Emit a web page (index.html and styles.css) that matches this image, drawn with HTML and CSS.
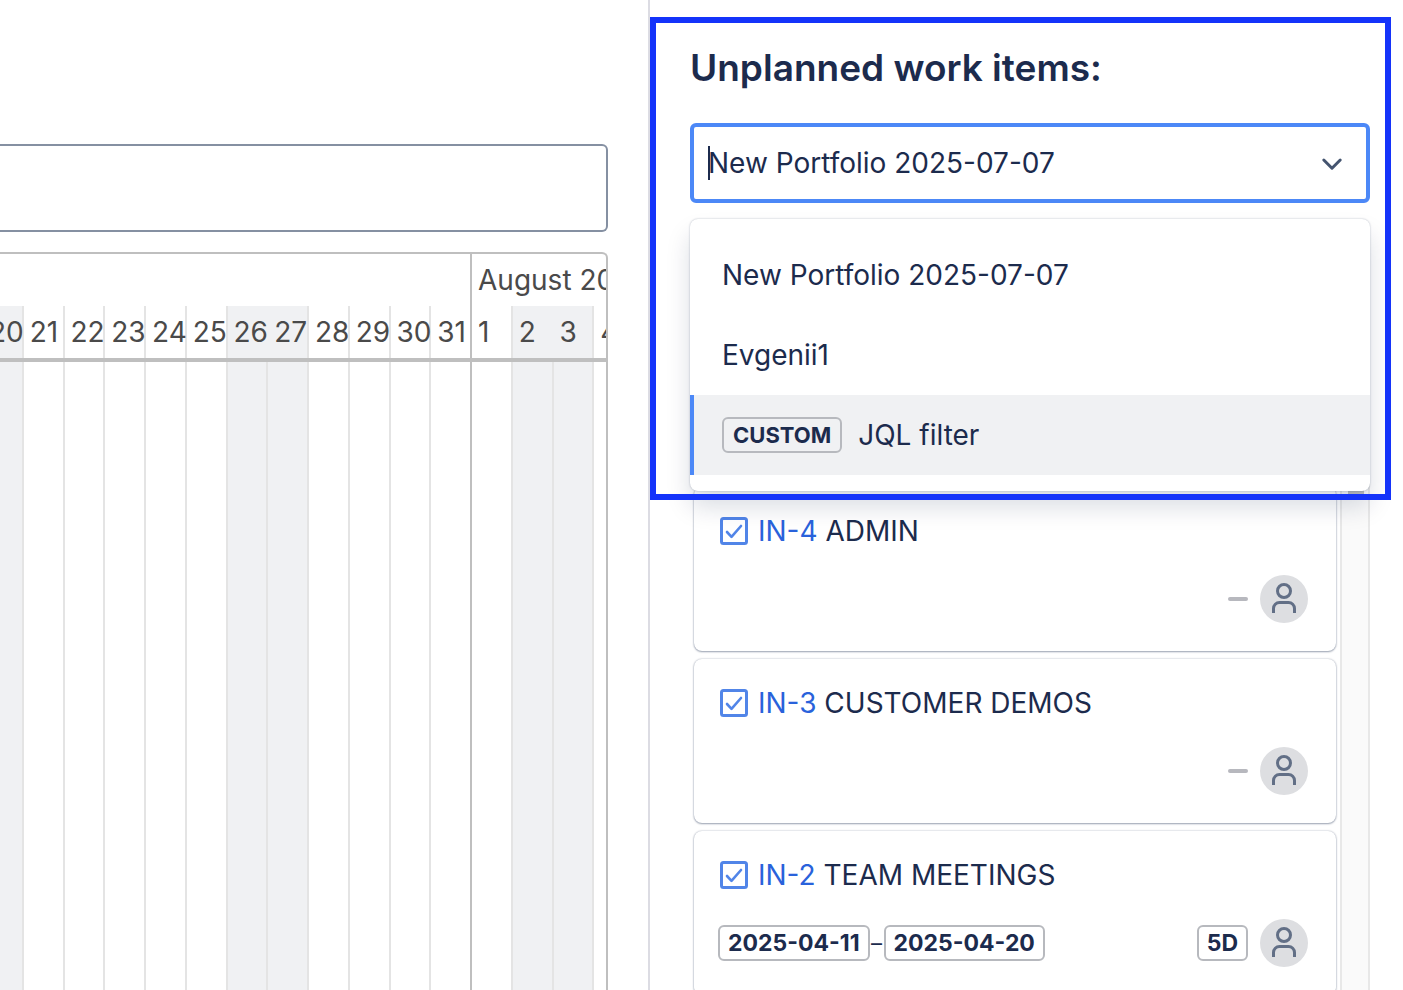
FILE: index.html
```html
<!DOCTYPE html>
<html lang="en">
<head>
<meta charset="utf-8">
<title>Unplanned work items</title>
<link rel="stylesheet" href="styles.css">
</head>
<body>
<svg width="0" height="0" class="sprite" aria-hidden="true">
  <symbol id="task" viewBox="0 0 28 28"><rect x="1.5" y="1.5" width="25" height="25" rx="2" fill="none" stroke="#5185E8" stroke-width="3"/><path d="M7 15 11.5 19.8 21 9" fill="none" stroke="#5185E8" stroke-width="2.6" stroke-linecap="round" stroke-linejoin="round"/></symbol>
  <symbol id="person" viewBox="0 0 48 48"><circle cx="24" cy="24" r="24" fill="#DDDEE1"/><circle cx="24" cy="16" r="6.5" fill="none" stroke="#626F86" stroke-width="3"/><path d="M13.5 38V33.5a6 6 0 0 1 6-6h9a6 6 0 0 1 6 6V38" fill="none" stroke="#626F86" stroke-width="3"/></symbol>
</svg>
<div class="app">
  <main class="planner">
    <input class="search" type="text" aria-label="Search">
    <section class="timeline" aria-label="Timeline">
      <div class="days">
        <div class="day off"><span class="num">20</span></div>
        <div class="day"><span class="num">21</span></div>
        <div class="day"><span class="num">22</span></div>
        <div class="day"><span class="num">23</span></div>
        <div class="day"><span class="num">24</span></div>
        <div class="day"><span class="num">25</span></div>
        <div class="day off"><span class="num open">26</span></div>
        <div class="day off"><span class="num">27</span></div>
        <div class="day"><span class="num">28</span></div>
        <div class="day"><span class="num">29</span></div>
        <div class="day"><span class="num">30</span></div>
        <div class="day month-end"><span class="num">31</span></div>
        <div class="day"><span class="month">August 2025</span><span class="num">1</span></div>
        <div class="day off"><span class="num open">2</span></div>
        <div class="day off"><span class="num">3</span></div>
        <div class="day"><span class="num">4</span></div>
      </div>
    </section>
  </main>
  <aside class="panel">
    <h2 class="title">Unplanned work items:</h2>
    <div class="picker">
      <div class="control">
        <span class="caret"></span>
        <input class="value" type="text" role="combobox" aria-label="Source" aria-expanded="true" aria-controls="sources" value="New Portfolio 2025-07-07">
        <button class="toggle" type="button" aria-label="Toggle list"><svg width="24" height="24" viewBox="0 0 24 24"><path d="M3.8 9 12 17.2 20.2 9" fill="none" stroke="#44546F" stroke-width="3" stroke-linecap="round" stroke-linejoin="round"/></svg></button>
      </div>
      <div class="menu" id="sources" role="listbox">
        <button class="option" type="button" role="option">New Portfolio 2025-07-07</button>
        <button class="option" type="button" role="option">Evgenii1</button>
        <button class="option active" type="button" role="option"><span class="badge">CUSTOM</span>JQL filter</button>
      </div>
    </div>
    <div class="list">
      <div class="cards">
        <article class="card">
          <div class="summary"><svg class="task"><use href="#task"/></svg><span><a href="#in-4">IN-4</a> ADMIN</span></div>
          <div class="meta"><span class="bar"></span><svg class="avatar"><use href="#person"/></svg></div>
        </article>
        <article class="card">
          <div class="summary"><svg class="task"><use href="#task"/></svg><span><a href="#in-3">IN-3</a> CUSTOMER DEMOS</span></div>
          <div class="meta"><span class="bar"></span><svg class="avatar"><use href="#person"/></svg></div>
        </article>
        <article class="card">
          <div class="summary"><svg class="task"><use href="#task"/></svg><span><a href="#in-2">IN-2</a> TEAM MEETINGS</span></div>
          <div class="meta"><span class="dates"><span class="badge">2025-04-11</span><span class="dash">–</span><span class="badge">2025-04-20</span></span><span class="badge">5D</span><svg class="avatar"><use href="#person"/></svg></div>
        </article>
      </div>
      <div class="track"><div class="thumb"></div></div>
    </div>
    <div class="frame"></div>
  </aside>
</div>
</body>
</html>
```
FILE: styles.css
```css
* { box-sizing: border-box; }
body { margin: 0; background: #fff; color: #1c2b4d; font: 400 28px/40px Inter, "Liberation Sans", sans-serif; }
button, input { font: inherit; color: inherit; margin: 0; }
.sprite { position: absolute; }
.app { display: grid; grid-template-columns: minmax(0, 1fr) 755px; height: 100vh; overflow: hidden; }

.planner { display: flex; flex-direction: column; gap: 20px; padding: 144px 40px 0 0; min-width: 0; }
.search { flex: none; width: 100%; height: 88px; padding: 0 16px; border: 2px solid #8590a2; border-left: 0; border-radius: 0 6px 6px 0; background: #fff; outline: 0; }
.timeline { flex: 1; display: flex; overflow: hidden; border: 2px solid #bfbfbf; border-width: 2px 2px 0 0; border-radius: 0 6px 0 0; color: #4a4a4a; }
.days { flex: 1 0 auto; display: grid; grid-template-columns: repeat(16, 1fr); width: calc(100% + 46px); margin: 0 -29px 0 -17px; background: linear-gradient(#bfbfbf, #bfbfbf) 0 104px / 100% 4px no-repeat; }
.day { display: grid; grid-template-rows: 52px 52px 1fr; min-width: 0; white-space: nowrap; }
.day::after { content: ""; grid-row: 3; margin-top: 4px; border-right: 2px solid #e4e4e4; }
.month, .num { line-height: 52px; padding-left: 6px; min-width: 0; }
.month { grid-row: 1; }
.num { grid-row: 2; border-right: 2px solid #e4e4e4; }
.off .num, .off::after { background-color: #f0f1f3; }
.num.open { border-right-color: #f0f1f3; }
.month-end { border-right: 2px solid #bfbfbf; }
.month-end .num, .month-end::after { border-right: 0; }

.panel { position: relative; border-left: 2px solid #dcdce3; padding: 44px 33px 0 40px; display: flex; flex-direction: column; min-height: 0; }
.title { margin: 0 0 31px; font-size: 37px; line-height: 48px; font-weight: 600; }
.picker { position: relative; z-index: 1; }
.control { display: flex; align-items: center; height: 80px; padding: 0 22px 0 14px; border: 4px solid #4c88f7; border-radius: 6px; background: #fff; }
.caret { width: 2px; height: 34px; margin-right: -2px; background: #1c2b4d; }
.value { flex: 1; min-width: 0; padding: 0; border: 0; outline: 0; background: none; }
.toggle { display: flex; padding: 0; border: 0; background: none; }
.menu { position: absolute; top: 96px; left: 0; right: 0; padding: 16px 0; border-radius: 8px; background: #fff; box-shadow: 0 16px 24px rgba(9, 30, 66, .15), 0 0 2px rgba(9, 30, 66, .31); }
.option { display: flex; align-items: center; gap: 16px; width: 100%; height: 80px; padding: 0 28px; border: 0; border-left: 4px solid transparent; background: none; text-align: left; }
.option.active { border-left-color: #4c88f7; background: #f0f1f3; }
.badge { flex: none; height: 36px; padding: 0 8px; border: 2px solid #b7b9be; border-radius: 6px; font-size: 23px; line-height: 32px; font-weight: 700; }
.option .badge { padding: 0 9px; font-size: 22px; }

.list { flex: 1; min-height: 0; display: flex; margin-top: 280px; }
.cards { flex: 1; display: flex; flex-direction: column; gap: 8px; padding: 4px; overflow: hidden; }
.card { flex: none; padding: 24px 28px 28px 24px; border-radius: 8px; background: #fff; box-shadow: 0 1px 2px rgba(9, 30, 66, .35), 0 0 2px rgba(9, 30, 66, .31); }
.summary { display: flex; align-items: center; gap: 10px; padding-left: 2px; margin-bottom: 24px; }
.summary a { color: #2962db; text-decoration: none; }
.task { width: 28px; height: 28px; }
.meta { display: flex; align-items: center; justify-content: flex-end; gap: 12px; height: 48px; }
.dates { display: flex; align-items: center; margin-right: auto; }
.dash { width: 14px; text-align: center; font-size: 22px; line-height: 36px; }
.bar { width: 20px; height: 4px; border-radius: 2px; background: #b7b8be; }
.avatar { width: 48px; height: 48px; }
.track { width: 30px; padding: 0 4px 0 6px; border: 2px solid #e8e8e8; border-width: 0 2px; background: #fafafa; }
.thumb { height: 12px; background: #c1c1c1; }
.frame { position: absolute; z-index: 2; top: 17px; left: 0; right: 12px; height: 483px; border: 6px solid #1433fa; pointer-events: none; }
```
